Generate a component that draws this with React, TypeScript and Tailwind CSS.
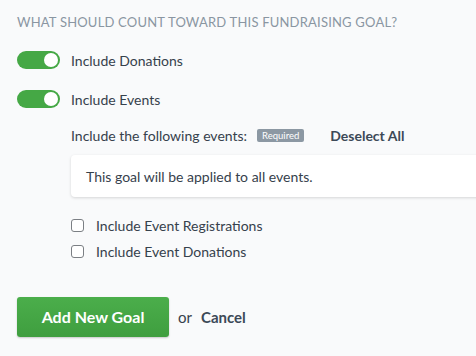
import React, { useState } from "react";

const Toggle = ({ on }: { on: boolean }) => (
	<div
		className={`relative w-[43px] h-[18px] rounded-full shrink-0 ${on ? "bg-[#45a845]" : "bg-[#c5ccd3]"}`}
	>
		<div
			className={`absolute top-[2px] w-[14px] h-[14px] rounded-full bg-white ${on ? "right-[2px]" : "left-[2px]"}`}
		></div>
	</div>
);

const Check = ({ label }: { label: string }) => (
	<label className="flex items-center h-[26px]">
		<span className="w-[13px] h-[13px] rounded-[3px] border border-[#7b7f84] bg-white shrink-0"></span>
		<span className="ml-[12px] text-[14px] text-[#36414c]">{label}</span>
	</label>
);

export default function App() {
	const [donations] = useState(true);
	const [events] = useState(true);

	return (
		<div
			className="w-[476px] h-[356px] bg-[#f9fafb] overflow-hidden text-[#36414c]"
			style={{ fontFamily: "Lato, 'Open Sans', sans-serif" }}
		>
			<div className="pl-[17px] pt-[13px]">
				<div className="text-[13px] leading-[18px] tracking-[0.2px] text-[#8a96a2] uppercase">
					What should count toward this fundraising goal?
				</div>

				<div className="mt-[20px] flex items-center h-[18px]">
					<Toggle on={donations} />
					<span className="ml-[11px] text-[14px]">Include Donations</span>
				</div>
				<div className="mt-[21px] flex items-center h-[18px]">
					<Toggle on={events} />
					<span className="ml-[11px] text-[14px]">Include Events</span>
				</div>

				<div className="pl-[54px]">
					<div className="mt-[19px] flex items-center h-[16px]">
						<span className="text-[14px]">Include the following events:</span>
						<span className="ml-[10px] h-[13px] px-[5px] rounded-[2px] bg-[#8c98a3] text-white text-[9.5px] leading-[13px]">
							Required
						</span>
						<span className="ml-[26px] text-[14px] font-bold text-[#3c4957]">
							Deselect All
						</span>
					</div>

					<div className="mt-[12px] -mr-[20px] h-[42px] flex items-center pl-[15px] bg-white rounded-[4px] shadow-[0_1px_3px_rgba(0,0,0,0.15)]">
						<span className="text-[14px]">This goal will be applied to all events.</span>
					</div>

					<div className="mt-[15px]">
						<Check label="Include Event Registrations" />
						<Check label="Include Event Donations" />
					</div>
				</div>

				<div className="mt-[33px] flex items-center">
					<button className="w-[152px] h-[40px] rounded-[3px] bg-gradient-to-b from-[#4bae4b] to-[#3f9e3f] text-white text-[16px] font-bold shadow-[0_1px_2px_rgba(0,0,0,0.2)]">
						Add New Goal
					</button>
					<span className="ml-[9px] text-[15px]">or</span>
					<span className="ml-[9px] text-[15px] font-bold text-[#3c4957]">Cancel</span>
				</div>
			</div>
		</div>
	);
}
